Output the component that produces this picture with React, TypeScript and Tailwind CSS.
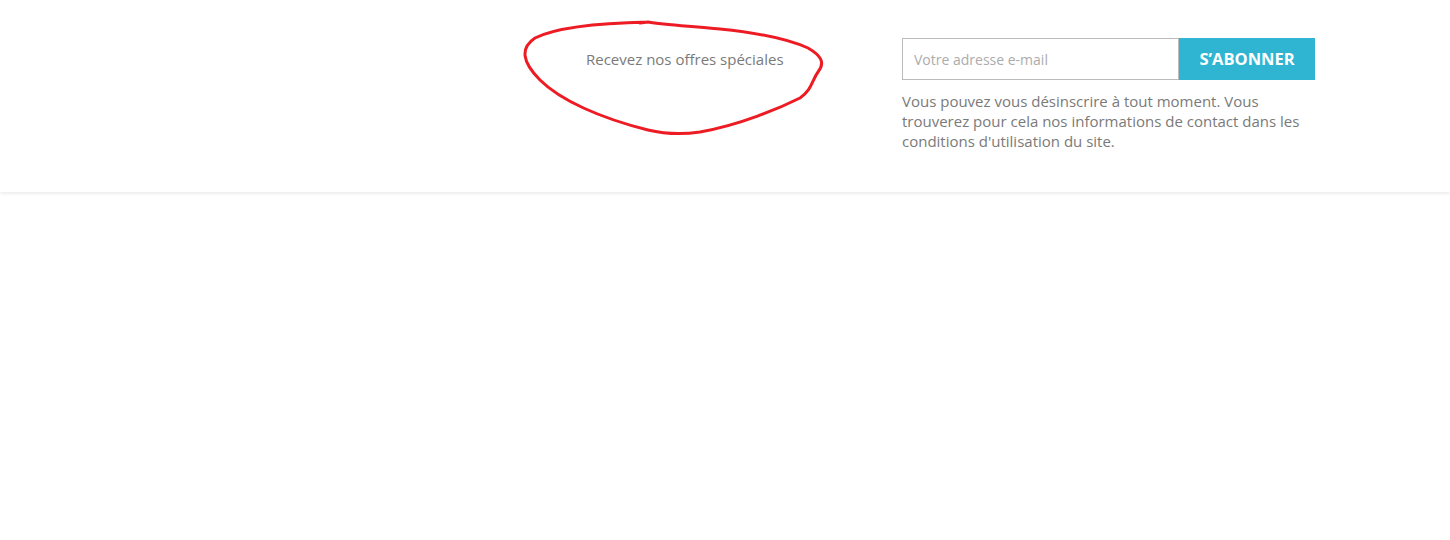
import React from 'react';

const App: React.FC = () => {
  return (
    <div className="relative min-h-[540px] bg-white font-['Open_Sans',sans-serif]">
      {/* Newsletter band */}
      <div className="h-[192px] bg-white shadow-[0_2px_3px_rgba(0,0,0,0.07)]">
        <div className="flex pt-[38px]">
          <p className="ml-[586px] w-[316px] text-[15px] leading-[42px] text-[#7a7a7a]">
            Recevez nos offres spéciales
          </p>
          <form className="w-[413px]" onSubmit={(e) => e.preventDefault()}>
            <div className="flex h-[42px]">
              <input
                type="email"
                placeholder="Votre adresse e-mail"
                className="h-full w-[277px] border border-[#bbbbbb] bg-white px-[11px] text-[14px] text-[#7a7a7a] outline-none placeholder:text-[#acacac]"
              />
              <button
                type="submit"
                className="h-full flex-1 bg-[#2fb5d2] text-[16.5px] font-bold uppercase text-white"
              >
                S’abonner
              </button>
            </div>
            <p className="mt-[11px] text-[15px] leading-[20px] text-[#7a7a7a]">
              Vous pouvez vous désinscrire à tout moment. Vous trouverez pour cela nos informations de contact dans les conditions d'utilisation du site.
            </p>
          </form>
        </div>
      </div>

      {/* hand-drawn annotation */}
      <svg className="pointer-events-none absolute left-0 top-0" width="1450" height="200" viewBox="0 0 1450 200">
        <path
          d="M 648 22 C 600 23, 555 28, 535 38 C 520 48, 522 62, 540 80 C 560 100, 600 118, 648 130 C 665 134, 680 135, 700 132 C 740 125, 780 108, 800 98 C 812 90, 812 80, 818 72 C 826 62, 820 55, 808 48 C 790 40, 760 33, 720 29 C 690 26, 665 25, 648 22 L 640 23"
          fill="none"
          stroke="#ed1c24"
          strokeWidth="3"
          strokeLinecap="round"
          strokeLinejoin="round"
        />
      </svg>
    </div>
  );
};

export default App;
